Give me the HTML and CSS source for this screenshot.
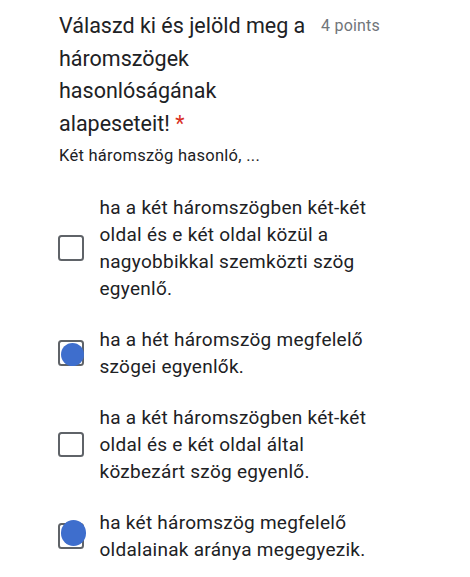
FILE: index.html
```html
<!DOCTYPE html>
<html lang="hu">
<head>
<meta charset="utf-8">
<title>Kérdés</title>
<link rel="stylesheet" href="styles.css">
</head>
<body>
<div class="card">
  <div class="header">
    <div class="title">Válaszd ki és jelöld meg a háromszögek hasonlóságának alapeseteit! <span class="req">*</span></div>
    <div class="points">4 points</div>
  </div>
  <div class="desc">Két háromszög hasonló, ...</div>
  <div class="options">
    <div class="option">
      <div class="check"></div>
      <div class="label">ha a két háromszögben két-két oldal és e két oldal közül a nagyobbikkal szemközti szög egyenlő.</div>
    </div>
    <div class="option">
      <div class="check"><span class="dot dot-a"></span></div>
      <div class="label">ha a hét háromszög megfelelő szögei egyenlők.</div>
    </div>
    <div class="option">
      <div class="check"></div>
      <div class="label">ha a két háromszögben két-két oldal és e két oldal által közbezárt szög egyenlő.</div>
    </div>
    <div class="option">
      <div class="check"><span class="dot dot-b"></span></div>
      <div class="label">ha két háromszög megfelelő oldalainak aránya megegyezik.</div>
    </div>
  </div>
</div>
</body>
</html>
```
FILE: styles.css
```css
html, body {
  margin: 0;
  padding: 0;
  background: #ffffff;
}
body {
  font-family: Roboto, "Liberation Sans", Arial, sans-serif;
  color: #202124;
  width: 470px;
  height: 577px;
  overflow: hidden;
}
.card {
  padding: 10px 90px 0 58px;
}
.header {
  display: flex;
  align-items: flex-start;
  gap: 10px;
}
.title {
  flex: 1;
  font-size: 21.5px;
  line-height: 32.5px;
  padding-left: 1px;
  color: #202124;
}
.req {
  color: #d93025;
}
.points {
  margin-top: 4px;
  font-size: 16px;
  line-height: 24px;
  color: #70757a;
  letter-spacing: 0.2px;
  white-space: nowrap;
}
.desc {
  margin-top: 4px;
  padding-left: 1px;
  font-size: 16.5px;
  line-height: 24px;
  letter-spacing: 0.27px;
  color: #202124;
}
.options {
  margin-top: 26px;
  display: flex;
  flex-direction: column;
  gap: 24px;
}
.option {
  display: flex;
  align-items: center;
  gap: 16px;
}
.check {
  position: relative;
  flex: none;
  width: 21.5px;
  height: 21.5px;
  border: 2.7px solid #5f6368;
  border-radius: 3.5px;
}
.dot {
  position: absolute;
  border-radius: 50%;
  background: #3e6ecd;
}
.dot-a {
  left: 0.5px;
  top: 0.7px;
  width: 23px;
  height: 23px;
}
.dot-b {
  left: 0.7px;
  top: -5px;
  width: 25px;
  height: 25.5px;
}
.label {
  flex: 1;
  font-size: 19px;
  line-height: 27px;
  letter-spacing: 0.27px;
  color: #202124;
}
```
